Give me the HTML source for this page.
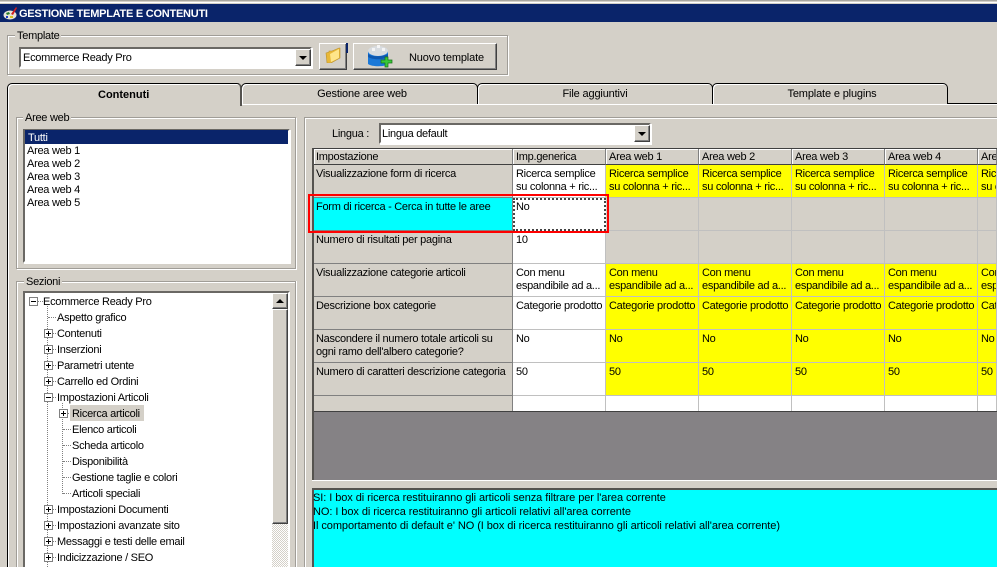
<!DOCTYPE html>
<html><head><meta charset="utf-8"><style>
html,body{margin:0;padding:0;background:#d4d0c8;width:997px;height:567px;overflow:hidden}
body{font:11px/13px "Liberation Sans",sans-serif;color:#000;letter-spacing:-.27px}
#r{position:absolute;left:0;top:0;width:997px;height:567px;overflow:hidden;background:#d4d0c8}
div{position:absolute;box-sizing:border-box}
.t{white-space:nowrap}
.g{border:1px solid #a09d97;box-shadow:1px 1px 0 #fff,inset 1px 1px 0 #fff}
.l{background:#d4d0c8;padding:0 2px;white-space:nowrap;line-height:13px}
.sunk{background:#fff;border:2px solid;border-color:#6a6864 #fff #fff #6a6864;box-shadow:1px 1px 0 #fff}
.btn{background:#d4d0c8;border:1px solid;border-color:#fff #404040 #404040 #fff;box-shadow:inset -1px -1px 0 #808080}
.tab{height:21px;top:83px;border:1px solid #000;border-bottom:0;border-radius:5px 5px 0 0;text-align:center;line-height:21px;background:#d4d0c8;letter-spacing:-.15px;box-shadow:inset 1px 1px 0 #fff}
.c{border-right:1px solid #c0c0c0;border-bottom:1px solid #c0c0c0;padding:3px 0 0 3px;white-space:nowrap;overflow:hidden;line-height:13px}
.h{border-right:1px solid #808080;border-bottom:1px solid #404040;padding:2px 0 0 3px;white-space:nowrap;overflow:hidden;line-height:13px;background:#d4d0c8;box-shadow:inset 1px 1px 0 #fff}
.f{border-right:1px solid #808080;border-bottom:1px solid #808080;padding:3px 0 0 2px;white-space:nowrap;background:#d4d0c8;line-height:13px}
.y{background:#ff0}.w{background:#fff}.k{background:#d4d0c8}
.arrow{width:0;height:0;border-left:4px solid transparent;border-right:4px solid transparent;border-top:4px solid #000}
.tr{white-space:nowrap;line-height:13px}
.pm{width:9px;height:9px;border:1px solid #808080;background:#fff}
.pm:before{content:"";position:absolute;left:1px;top:3px;width:5px;height:1px;background:#000}
.pm.p:after{content:"";position:absolute;left:3px;top:1px;width:1px;height:5px;background:#000}
.dh{height:1px;border-top:1px dotted #808080}
.dv{width:1px;border-left:1px dotted #808080}
</style></head><body><div id="r">

<div style="left:0;top:0;width:997px;height:1px;background:#a8a6a0"></div>
<div style="left:0;top:2px;width:997px;height:1px;background:#fff"></div>
<div style="left:0;top:4px;width:997px;height:18px;background:#0a246a"></div>
<svg style="position:absolute;left:2px;top:6px" width="16" height="15" viewBox="0 0 16 15"><ellipse cx="8" cy="9" rx="6.500" ry="4.500" fill="#e8e4d8"/><path d="M4 7l3-1 1 2-3 1z" fill="#2a7d2a"/><path d="M8 10l3 0 0 2-3 0z" fill="#d8c020"/><path d="M9 8L14 1l1 1-4 7z" fill="#d02020"/><rect x="4" y="10" width="2" height="2" fill="#2040c0"/></svg>
<div class="t" style="left:19px;top:7px;color:#fff;font-weight:bold;font-size:11px;line-height:14px;letter-spacing:-.25px">GESTIONE TEMPLATE E CONTENUTI</div>

<div class="g" style="left:7px;top:35px;width:501px;height:40px"></div>
<div class="l" style="left:15px;top:30px">Template</div>
<div class="sunk" style="left:19px;top:47px;width:293px;height:21px"></div>
<div class="t" style="left:23px;top:52px">Ecommerce Ready Pro</div>
<div class="btn" style="left:295px;top:49px;width:16px;height:17px"></div>
<div class="arrow" style="left:299px;top:56px"></div>

<div class="btn" style="left:319px;top:43px;width:28px;height:27px"></div>
<div style="left:346px;top:43px;width:2px;height:10px;background:#0a246a"></div>
<svg style="position:absolute;left:325px;top:47px" width="16" height="16" viewBox="0 0 16 16"><path d="M1 6l3-1 0-1 3 0 7-3 1 0 0 10-9 5-4 0z" fill="#e8b838" stroke="#b89030" stroke-width=".6"/><path d="M5 7l9-5 0 9-8 4z" fill="#ffe68a"/></svg>

<div class="btn" style="left:353px;top:43px;width:144px;height:27px"></div>
<svg style="position:absolute;left:368px;top:44px" width="25" height="24" viewBox="0 0 25 24"><path d="M0 7h20v13c-3 3-16 3-20 0z" fill="#1a78d8"/><path d="M0 10c4 3 14 3 20 0v3c-5 3-15 3-20 0z" fill="#0e58b0"/><ellipse cx="10" cy="7" rx="10" ry="5" fill="#d8dce0"/><path d="M4 4h3v3H4zM9 1h3v3H9zM14 4h3v3h-3z" fill="#f4f4f4"/><path d="M17 13h3v3h4v3h-4v4h-3v-4h-4v-3h4z" fill="#38c838" stroke="#187018" stroke-width=".7"/></svg>
<div class="t" style="left:409px;top:52px;letter-spacing:-.15px">Nuovo template</div>

<!-- tabs -->
<div style="left:7px;top:103px;width:990px;height:1px;background:#000"></div>
<div style="left:7px;top:104px;width:990px;height:1px;background:#fff"></div>
<div class="tab" style="left:241px;width:237px;padding-left:5px">Gestione aree web</div>
<div class="tab" style="left:477px;width:236px">File aggiuntivi</div>
<div class="tab" style="left:712px;width:236px;padding-left:4px">Template e plugins</div>
<div style="left:7px;top:83px;width:235px;height:23px;background:#d4d0c8;border-top:1px solid #000;border-left:1px solid #000;border-right:2px solid #55534f;border-radius:5px 5px 0 0;box-shadow:inset 1px 1px 0 #fff"></div>
<div class="t" style="left:98px;top:89px;font-weight:bold;letter-spacing:0">Contenuti</div>
<div style="left:7px;top:90px;width:1px;height:477px;background:#000"></div>
<div style="left:8px;top:90px;width:1px;height:477px;background:#fff"></div>

<!-- aree web -->
<div class="g" style="left:16px;top:117px;width:280px;height:152px"></div>
<div class="l" style="left:23px;top:112px">Aree web</div>
<div class="sunk" style="left:23px;top:129px;width:267px;height:134px"></div>
<div style="left:25px;top:130px;width:263px;height:14px;background:#0a246a"></div>
<div class="t" style="left:28px;top:132px;color:#fff">Tutti</div>
<div class="t" style="left:27px;top:145px">Area web 1</div>
<div class="t" style="left:27px;top:158px">Area web 2</div>
<div class="t" style="left:27px;top:171px">Area web 3</div>
<div class="t" style="left:27px;top:184px">Area web 4</div>
<div class="t" style="left:27px;top:197px">Area web 5</div>

<!-- sezioni -->
<div style="left:16px;top:281px;width:280px;height:286px;border:1px solid #a09d97;border-bottom:0;box-shadow:inset 1px 1px 0 #fff"></div>
<div style="left:296px;top:281px;width:1px;height:286px;background:#fff"></div>
<div class="l" style="left:24px;top:276px">Sezioni</div>
<div style="left:23px;top:291px;width:267px;height:276px;background:#fff;border:2px solid;border-color:#6a6864 #fff #fff #6a6864;border-bottom:0"></div>
<div style="left:272px;top:293px;width:16px;height:274px;background:repeating-conic-gradient(#d4d0c8 0 25%,#fff 0 50%) 0 0/2px 2px"></div>
<div class="btn" style="left:272px;top:293px;width:16px;height:16px"></div>
<div class="arrow" style="left:276px;top:299px;border-top:0;border-bottom:4px solid #000"></div>
<div class="btn" style="left:272px;top:309px;width:16px;height:215px"></div>

<div class="dv" style="left:47px;top:306px;height:261px"></div>
<div class="dv" style="left:62px;top:403px;height:91px"></div>
<div class="dh" style="left:38px;top:301px;width:5px"></div>
<div class="dh" style="left:48px;top:317px;width:8px"></div>
<div class="dh" style="left:48px;top:333px;width:8px"></div>
<div class="dh" style="left:48px;top:349px;width:8px"></div>
<div class="dh" style="left:48px;top:365px;width:8px"></div>
<div class="dh" style="left:48px;top:381px;width:8px"></div>
<div class="dh" style="left:48px;top:397px;width:8px"></div>
<div class="dh" style="left:63px;top:413px;width:8px"></div>
<div class="dh" style="left:63px;top:429px;width:8px"></div>
<div class="dh" style="left:63px;top:445px;width:8px"></div>
<div class="dh" style="left:63px;top:461px;width:8px"></div>
<div class="dh" style="left:63px;top:477px;width:8px"></div>
<div class="dh" style="left:63px;top:493px;width:8px"></div>
<div class="dh" style="left:48px;top:509px;width:8px"></div>
<div class="dh" style="left:48px;top:525px;width:8px"></div>
<div class="dh" style="left:48px;top:541px;width:8px"></div>
<div class="dh" style="left:48px;top:557px;width:8px"></div>

<div class="pm" style="left:29px;top:297px"></div>
<div class="pm p" style="left:44px;top:329px"></div>
<div class="pm p" style="left:44px;top:345px"></div>
<div class="pm p" style="left:44px;top:361px"></div>
<div class="pm p" style="left:44px;top:377px"></div>
<div class="pm" style="left:44px;top:393px"></div>
<div class="pm p" style="left:59px;top:409px"></div>
<div class="pm p" style="left:44px;top:505px"></div>
<div class="pm p" style="left:44px;top:521px"></div>
<div class="pm p" style="left:44px;top:537px"></div>
<div class="pm p" style="left:44px;top:553px"></div>

<div style="left:70px;top:405px;width:74px;height:16px;background:#d4d0c8"></div>
<div class="tr" style="left:43px;top:296px">Ecommerce Ready Pro</div>
<div class="tr" style="left:57px;top:312px">Aspetto grafico</div>
<div class="tr" style="left:57px;top:328px">Contenuti</div>
<div class="tr" style="left:57px;top:344px">Inserzioni</div>
<div class="tr" style="left:57px;top:360px">Parametri utente</div>
<div class="tr" style="left:57px;top:376px">Carrello ed Ordini</div>
<div class="tr" style="left:57px;top:392px">Impostazioni Articoli</div>
<div class="tr" style="left:72px;top:408px">Ricerca articoli</div>
<div class="tr" style="left:72px;top:424px">Elenco articoli</div>
<div class="tr" style="left:72px;top:440px">Scheda articolo</div>
<div class="tr" style="left:72px;top:456px">Disponibilità</div>
<div class="tr" style="left:72px;top:472px">Gestione taglie e colori</div>
<div class="tr" style="left:72px;top:488px">Articoli speciali</div>
<div class="tr" style="left:57px;top:504px">Impostazioni Documenti</div>
<div class="tr" style="left:57px;top:520px">Impostazioni avanzate sito</div>
<div class="tr" style="left:57px;top:536px">Messaggi e testi delle email</div>
<div class="tr" style="left:57px;top:552px">Indicizzazione / SEO</div>

<!-- right panel -->
<div style="left:304px;top:117px;width:693px;height:450px;border:1px solid #a09d97;border-right:0;border-bottom:0;box-shadow:inset 1px 1px 0 #fff"></div>
<div class="t" style="left:332px;top:128px">Lingua :</div>
<div class="sunk" style="left:379px;top:123px;width:272px;height:21px"></div>
<div class="t" style="left:382px;top:128px">Lingua default</div>
<div class="btn" style="left:634px;top:125px;width:16px;height:17px"></div>
<div class="arrow" style="left:638px;top:132px"></div>

<div style="left:312px;top:148px;width:685px;height:332px;background:#858285;border-top:1px solid #404040;border-left:2px solid #55534f"></div>
<div style="left:312px;top:480px;width:685px;height:1px;background:#fff"></div>

<!-- header -->
<div class="h" style="left:314px;top:149px;width:199px;height:16px;padding-left:2px">Impostazione</div>
<div class="h" style="left:513px;top:149px;width:93px;height:16px">Imp.generica</div>
<div class="h" style="left:606px;top:149px;width:93px;height:16px">Area web 1</div>
<div class="h" style="left:699px;top:149px;width:93px;height:16px">Area web 2</div>
<div class="h" style="left:792px;top:149px;width:93px;height:16px">Area web 3</div>
<div class="h" style="left:885px;top:149px;width:93px;height:16px">Area web 4</div>
<div class="h" style="left:978px;top:149px;width:19px;height:16px">Area web 5</div>

<!-- r1 -->
<div class="f" style="left:314px;top:165px;width:199px;height:33px">Visualizzazione form di ricerca</div>
<div class="c w" style="left:513px;top:165px;width:93px;height:33px">Ricerca semplice<br>su colonna + ric...</div>
<div class="c y" style="left:606px;top:165px;width:93px;height:33px">Ricerca semplice<br>su colonna + ric...</div>
<div class="c y" style="left:699px;top:165px;width:93px;height:33px">Ricerca semplice<br>su colonna + ric...</div>
<div class="c y" style="left:792px;top:165px;width:93px;height:33px">Ricerca semplice<br>su colonna + ric...</div>
<div class="c y" style="left:885px;top:165px;width:93px;height:33px">Ricerca semplice<br>su colonna + ric...</div>
<div class="c y" style="left:978px;top:165px;width:19px;height:33px">Ricerca semplice<br>su colonna + ric...</div>
<!-- r2 -->
<div class="f" style="left:314px;top:198px;width:199px;height:33px;background:#0ff">Form di ricerca - Cerca in tutte le aree</div>
<div class="c w" style="left:513px;top:198px;width:93px;height:33px;padding:1px 0 0 1px;border:2px dotted #444">No</div>
<div class="c k" style="left:606px;top:198px;width:93px;height:33px"></div>
<div class="c k" style="left:699px;top:198px;width:93px;height:33px"></div>
<div class="c k" style="left:792px;top:198px;width:93px;height:33px"></div>
<div class="c k" style="left:885px;top:198px;width:93px;height:33px"></div>
<div class="c k" style="left:978px;top:198px;width:19px;height:33px"></div>
<!-- r3 -->
<div class="f" style="left:314px;top:231px;width:199px;height:33px">Numero di risultati per pagina</div>
<div class="c w" style="left:513px;top:231px;width:93px;height:33px">10</div>
<div class="c k" style="left:606px;top:231px;width:93px;height:33px"></div>
<div class="c k" style="left:699px;top:231px;width:93px;height:33px"></div>
<div class="c k" style="left:792px;top:231px;width:93px;height:33px"></div>
<div class="c k" style="left:885px;top:231px;width:93px;height:33px"></div>
<div class="c k" style="left:978px;top:231px;width:19px;height:33px"></div>
<!-- r4 -->
<div class="f" style="left:314px;top:264px;width:199px;height:33px">Visualizzazione categorie articoli</div>
<div class="c w" style="left:513px;top:264px;width:93px;height:33px">Con menu<br>espandibile ad a...</div>
<div class="c y" style="left:606px;top:264px;width:93px;height:33px">Con menu<br>espandibile ad a...</div>
<div class="c y" style="left:699px;top:264px;width:93px;height:33px">Con menu<br>espandibile ad a...</div>
<div class="c y" style="left:792px;top:264px;width:93px;height:33px">Con menu<br>espandibile ad a...</div>
<div class="c y" style="left:885px;top:264px;width:93px;height:33px">Con menu<br>espandibile ad a...</div>
<div class="c y" style="left:978px;top:264px;width:19px;height:33px">Con menu<br>espandibile ad a...</div>
<!-- r5 -->
<div class="f" style="left:314px;top:297px;width:199px;height:33px">Descrizione box categorie</div>
<div class="c w" style="left:513px;top:297px;width:93px;height:33px">Categorie prodotto</div>
<div class="c y" style="left:606px;top:297px;width:93px;height:33px">Categorie prodotto</div>
<div class="c y" style="left:699px;top:297px;width:93px;height:33px">Categorie prodotto</div>
<div class="c y" style="left:792px;top:297px;width:93px;height:33px">Categorie prodotto</div>
<div class="c y" style="left:885px;top:297px;width:93px;height:33px">Categorie prodotto</div>
<div class="c y" style="left:978px;top:297px;width:19px;height:33px">Categorie prodotto</div>
<!-- r6 -->
<div class="f" style="left:314px;top:330px;width:199px;height:33px">Nascondere il numero totale articoli su<br>ogni ramo dell'albero categorie?</div>
<div class="c w" style="left:513px;top:330px;width:93px;height:33px">No</div>
<div class="c y" style="left:606px;top:330px;width:93px;height:33px">No</div>
<div class="c y" style="left:699px;top:330px;width:93px;height:33px">No</div>
<div class="c y" style="left:792px;top:330px;width:93px;height:33px">No</div>
<div class="c y" style="left:885px;top:330px;width:93px;height:33px">No</div>
<div class="c y" style="left:978px;top:330px;width:19px;height:33px">No</div>
<!-- r7 -->
<div class="f" style="left:314px;top:363px;width:199px;height:33px">Numero di caratteri descrizione categoria</div>
<div class="c w" style="left:513px;top:363px;width:93px;height:33px">50</div>
<div class="c y" style="left:606px;top:363px;width:93px;height:33px">50</div>
<div class="c y" style="left:699px;top:363px;width:93px;height:33px">50</div>
<div class="c y" style="left:792px;top:363px;width:93px;height:33px">50</div>
<div class="c y" style="left:885px;top:363px;width:93px;height:33px">50</div>
<div class="c y" style="left:978px;top:363px;width:19px;height:33px">50</div>
<!-- r8 -->
<div class="f" style="left:314px;top:396px;width:199px;height:16px"></div>
<div class="c w" style="left:513px;top:396px;width:93px;height:16px"></div>
<div class="c w" style="left:606px;top:396px;width:93px;height:16px"></div>
<div class="c w" style="left:699px;top:396px;width:93px;height:16px"></div>
<div class="c w" style="left:792px;top:396px;width:93px;height:16px"></div>
<div class="c w" style="left:885px;top:396px;width:93px;height:16px"></div>
<div class="c w" style="left:978px;top:396px;width:19px;height:16px"></div>
<div style="left:314px;top:411px;width:683px;height:1px;background:#404040"></div>

<!-- red highlight -->
<div style="left:308px;top:194px;width:301px;height:39px;border:2px solid #f00"></div>

<!-- description -->
<div style="left:312px;top:488px;width:685px;height:79px;background:#0ff;border-top:2px solid #55534f;border-left:2px solid #55534f"></div>
<div style="left:313px;top:491px;width:684px;overflow:hidden;white-space:nowrap;line-height:14px;letter-spacing:-.07px">SI: I box di ricerca restituiranno gli articoli senza filtrare per l'area corrente<br>NO: I box di ricerca restituiranno gli articoli relativi all'area corrente<br>Il comportamento di default e' NO (I box di ricerca restituiranno gli articoli relativi all'area corrente)</div>

</div></body></html>
